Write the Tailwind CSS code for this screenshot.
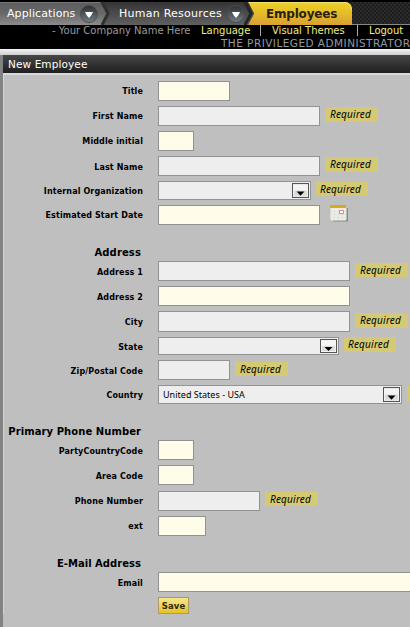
<!DOCTYPE html>
<html lang="en">
<head>
<meta charset="utf-8">
<title>New Employee</title>
<script src="https://cdn.jsdelivr.net/npm/@tailwindcss/browser@4"></script>
</head>
<body class="w-[410px] h-[627px] overflow-hidden bg-[#bfbfbf] font-['DejaVu_Sans',sans-serif] text-black">
<svg class="hidden">
  <symbol id="arrow" viewBox="0 0 17 14" preserveAspectRatio="none">
    <rect x=".5" y=".5" width="16" height="13" fill="#f4f4f4" stroke="#555"/>
    <rect x="2" y="7" width="13" height="5" fill="#dcdcdc"/>
    <path d="M4.500 8h8l-4 4z" fill="#000"/>
  </symbol>
</svg>
<header class="bg-black h-[49px] overflow-hidden">
  <nav class="relative h-[25px] flex items-center">
    <svg class="absolute inset-0" width="410" height="25" viewBox="0 0 410 25">
      <defs>
        <linearGradient id="g1" x2="0" y2="1"><stop offset="0" stop-color="#5c5c5c"/><stop offset=".5" stop-color="#686868"/><stop offset="1" stop-color="#8c8c8c"/></linearGradient>
        <linearGradient id="g2" x2="0" y2="1"><stop offset="0" stop-color="#343434"/><stop offset="1" stop-color="#606060"/></linearGradient>
        <linearGradient id="g3" x2="0" y2="1"><stop offset="0" stop-color="#ecd02a"/><stop offset=".5" stop-color="#e4bc28"/><stop offset="1" stop-color="#d9a034"/></linearGradient>
        <linearGradient id="g4" x2="0" y2="1"><stop offset="0" stop-color="#2a2f34"/><stop offset="1" stop-color="#747c84"/></linearGradient>
        <pattern id="mesh" width="4" height="4" patternUnits="userSpaceOnUse"><rect width="4" height="4" fill="#2b2b2b"/><circle cx="1" cy="1" r="1" fill="#191919"/><circle cx="3" cy="3" r="1" fill="#191919"/></pattern>
      </defs>
      <rect y="2" width="410" height="22" fill="url(#mesh)"/>
      <path d="M248 2H346Q352 3 352 10V25H248L254 13.500z" fill="url(#g3)"/>
      <path d="M248 2.500H345Q351 3 351.500 10" fill="none" stroke="#f3e26a"/>
      <path d="M100 2H248L254 13.500L248 25H100z" fill="url(#g2)"/>
      <path d="M245 2L251 13.500L245 25" fill="none" stroke="#252525" stroke-width="3"/>
      <path d="M0 2H102L108 13.500L102 25H0z" fill="url(#g1)"/>
      <path d="M102 2L108 13.500L102 25" fill="none" stroke="#303030" stroke-width="3"/>
      <path d="M0 2.500H100" stroke="#777"/>
      <path d="M352 24.500H410" stroke="#888"/>
      <g id="drop"><circle cx="89" cy="14" r="8.500" fill="url(#g4)" stroke="#4b4e50"/><path d="M85 12h8l-1.500 3-2.500 3-2.500-3z" fill="#fff"/></g>
      <use href="#drop" x="147"/>
    </svg>
    <span class="relative w-[112px] pl-[7px] pt-[3px] text-[11px] leading-[22px] text-white tracking-[.1px] whitespace-nowrap">Applications</span>
    <span class="relative w-[146px] pl-[7px] pt-[3px] text-[11px] leading-[22px] text-white tracking-[.25px] whitespace-nowrap">Human Resources</span>
    <span class="relative pl-[8px] pt-[3px] text-[12px] leading-[22px] font-bold text-[#2a210c] tracking-[-.2px] whitespace-nowrap">Employees</span>
  </nav>
  <div class="flex h-[12px] text-[10px] leading-[12px] whitespace-nowrap text-[#f0ed80]">
    <span class="w-[149px] ml-[52px] text-[#9b9b9b]">- Your Company Name Here</span>
    <span class="w-[59px]">Language</span>
    <span class="w-[97px] border-l border-[#aaa] pl-[11px] h-[11px]">Visual Themes</span>
    <span class="border-l border-[#aaa] pl-[11px] h-[11px]">Logout</span>
  </div>
  <div class="pl-[221px] text-[10.500px] tracking-[.46px] leading-[12px] text-[#9299a3] whitespace-nowrap">THE PRIVILEGED ADMINISTRATOR</div>
</header>
<div class="h-[6px] bg-linear-to-b from-[#f4f4f4] to-[#cfcfcf]"></div>
<main class="h-[572px] border-l-[3px] border-[#828282] bg-[#bfbfbf] overflow-hidden">
  <h1 class="h-[18px] bg-linear-to-b from-[#474747] to-[#202020] pl-[5px] text-[10.500px] tracking-[.1px] leading-[18px] text-white">New Employee</h1>
  <div class="h-[2px] bg-[#d9d9d9]"></div>
  <form class="border-l border-[#d4d4d4] pt-[6px] text-[8px] tracking-[.12px] font-bold leading-[22px] whitespace-nowrap">
    <div class="flex h-[25px]"><label class="w-[139px] mr-[15px] text-right">Title</label><span class="w-[72px] h-[20px] border border-[#929292] bg-[#fffdea]"></span></div>
    <div class="flex h-[25px]"><label class="w-[139px] mr-[15px] text-right">First Name</label><span class="w-[162px] h-[20px] border border-[#929292] bg-[#eee]"></span><i class="ml-[5px] mt-[1px] w-[53px] h-[15px] bg-[#d5ca73] pl-[5px] font-['Noto_Sans'] text-[10px] tracking-[.2px] font-normal leading-[15px]">Required</i></div>
    <div class="flex h-[25px]"><label class="w-[139px] mr-[15px] text-right">Middle initial</label><span class="w-[36px] h-[20px] border border-[#929292] bg-[#fffdea]"></span></div>
    <div class="flex h-[25px]"><label class="w-[139px] mr-[15px] pt-[1px] text-right">Last Name</label><span class="w-[162px] h-[20px] border border-[#929292] bg-[#eee]"></span><i class="ml-[5px] mt-[1px] w-[53px] h-[15px] bg-[#d5ca73] pl-[5px] font-['Noto_Sans'] text-[10px] tracking-[.2px] font-normal leading-[15px]">Required</i></div>
    <div class="flex h-[24px]"><label class="w-[139px] mr-[15px] text-right">Internal Organization</label><span class="flex justify-end w-[153px] h-[19px] border border-[#929292] bg-[#eee] pt-[1px] pr-[1px]"><svg width="17" height="15"><use href="#arrow" width="17" height="15"/></svg></span><i class="ml-[5px] mt-[1px] w-[52px] h-[14px] bg-[#d5ca73] pl-[4px] font-['Noto_Sans'] text-[10px] tracking-[.2px] font-normal leading-[15px]">Required</i></div>
    <div class="flex h-[56px]"><label class="w-[139px] mr-[15px] text-right">Estimated Start Date</label><span class="w-[162px] h-[20px] border border-[#929292] bg-[#fffdea]"></span>
      <svg class="ml-[10px]" width="19" height="18" viewBox="0 0 19 18"><path d="M2 3H18V16.500H3z" fill="#8b8b83"/><path d="M.5 2H16.500V14.500L15.500 15.500H1.500L.5 14z" fill="#eef0e8"/><path d="M.5 6.500H16M.5 9.500H16M.5 12.500H16M4.500 3V15M8.500 3V15M12.500 3V15" stroke="#e0e3de" fill="none"/><path d="M0 0H16V3H0z" fill="#d5ac20"/><rect x="9.500" y="5.500" width="4" height="3" fill="#fff" stroke="#ed8a80"/></svg>
    </div>
    <div class="flex h-[25px]"><label class="w-[139px] mr-[15px] pt-[1px] text-right"><b class="block h-0 relative -top-[20px] pr-[2px] text-[10px]">Address</b>Address 1</label><span class="w-[192px] h-[20px] border border-[#929292] bg-[#eee]"></span><i class="ml-[5px] mt-[2px] w-[53px] h-[14px] bg-[#d5ca73] pl-[5px] font-['Noto_Sans'] text-[10px] tracking-[.2px] font-normal leading-[15px]">Required</i></div>
    <div class="flex h-[25px]"><label class="w-[139px] mr-[15px] pt-[1px] text-right">Address 2</label><span class="w-[192px] h-[20px] border border-[#929292] bg-[#fffdea]"></span></div>
    <div class="flex h-[26px]"><label class="w-[139px] mr-[15px] pt-[1px] text-right">City</label><span class="w-[192px] h-[21px] border border-[#929292] bg-[#eee]"></span><i class="ml-[5px] mt-[2px] w-[53px] h-[15px] bg-[#d5ca73] pl-[5px] font-['Noto_Sans'] text-[10px] tracking-[.2px] font-normal leading-[15px]">Required</i></div>
    <div class="flex h-[23px]"><label class="w-[139px] mr-[15px] text-right">State</label><span class="flex justify-end w-[181px] h-[18px] border border-[#929292] bg-[#eee] pt-[1px] pr-[1px]"><svg width="17" height="14"><use href="#arrow" width="17" height="14"/></svg></span><i class="ml-[5px] w-[52px] h-[15px] bg-[#d5ca73] pl-[4px] font-['Noto_Sans'] text-[10px] tracking-[.2px] font-normal leading-[15px]">Required</i></div>
    <div class="flex h-[25px]"><label class="w-[139px] mr-[15px] pt-[1px] text-right">Zip/Postal Code</label><span class="w-[72px] h-[20px] border border-[#929292] bg-[#eee]"></span><i class="ml-[5px] mt-[2px] w-[53px] h-[14px] bg-[#d5ca73] pl-[5px] font-['Noto_Sans'] text-[10px] tracking-[.2px] font-normal leading-[15px]">Required</i></div>
    <div class="flex h-[55px]"><label class="shrink-0 w-[139px] mr-[15px] text-right">Country</label><span class="flex shrink-0 justify-between w-[244px] h-[19px] border border-[#929292] bg-[#eee] pt-[1px] pl-[4px] pr-[1px] font-['Noto_Sans'] text-[9px] tracking-[.02px] font-normal leading-[15px]">United States - USA<svg width="17" height="15"><use href="#arrow" width="17" height="15"/></svg></span><span class="shrink-0 ml-[5px] mt-[1px] w-[5px] h-[15px] bg-[#d5ca73]"></span></div>
    <div class="flex h-[25px]"><label class="w-[139px] mr-[15px] pt-[1px] text-right"><b class="block h-0 relative -top-[20px] pr-[2px] text-[10px] tracking-[.07px]">Primary Phone Number</b>PartyCountryCode</label><span class="w-[36px] h-[20px] border border-[#929292] bg-[#fffdea]"></span></div>
    <div class="flex h-[26px]"><label class="w-[139px] mr-[15px] pt-[1px] text-right">Area Code</label><span class="w-[36px] h-[20px] border border-[#929292] bg-[#fffdea]"></span></div>
    <div class="flex h-[25px]"><label class="w-[139px] mr-[15px] text-right">Phone Number</label><span class="w-[102px] h-[20px] border border-[#929292] bg-[#eee]"></span><i class="ml-[5px] mt-[1px] w-[53px] h-[14px] bg-[#d5ca73] pl-[5px] font-['Noto_Sans'] text-[10px] tracking-[.2px] font-normal leading-[15px]">Required</i></div>
    <div class="flex h-[56px]"><label class="w-[139px] mr-[15px] text-right">ext</label><span class="w-[48px] h-[20px] border border-[#929292] bg-[#fffdea]"></span></div>
    <div class="flex h-[25px]"><label class="w-[139px] mr-[15px] pt-[1px] text-right"><b class="block h-0 relative -top-[20px] pr-[2px] text-[10px] tracking-[.03px]">E-Mail Address</b>Email</label><span class="w-[252px] h-[20px] border border-r-0 border-[#929292] bg-[#fffdea]"></span></div>
    <button type="button" class="block ml-[154px] w-[31px] h-[17px] border border-[#a99b62] bg-linear-to-b from-[#f5e687] to-[#e5c21f] text-[8.500px] leading-[16px] font-bold text-[#30290c]">Save</button>
  </form>
</main>
</body>
</html>
